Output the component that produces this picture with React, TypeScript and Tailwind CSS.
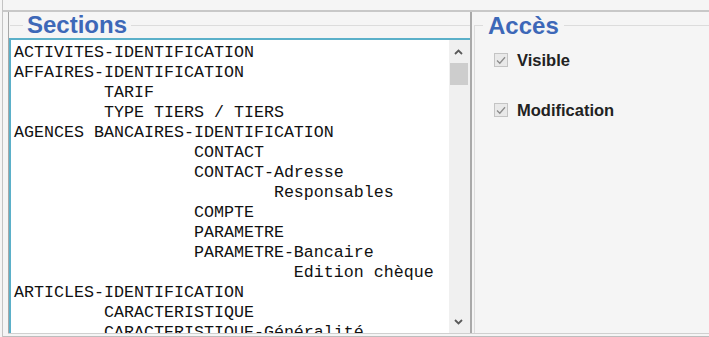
import React from "react";

const lines: [number, string][] = [
  [0, "ACTIVITES-IDENTIFICATION"],
  [0, "AFFAIRES-IDENTIFICATION"],
  [9, "TARIF"],
  [9, "TYPE TIERS / TIERS"],
  [0, "AGENCES BANCAIRES-IDENTIFICATION"],
  [18, "CONTACT"],
  [18, "CONTACT-Adresse"],
  [26, "Responsables"],
  [18, "COMPTE"],
  [18, "PARAMETRE"],
  [18, "PARAMETRE-Bancaire"],
  [28, "Edition chèque"],
  [0, "ARTICLES-IDENTIFICATION"],
  [9, "CARACTERISTIQUE"],
  [9, "CARACTERISTIQUE-Généralité"],
];

function Check({ label }: { label: string }) {
  return (
    <div className="flex items-center h-[20px]">
      <div className="w-[14px] h-[14px] border border-[#c4c4c4] bg-[#e9e9e9] flex items-center justify-center">
        <svg width="12" height="12" viewBox="0 0 12 12">
          <path d="M2 6.5 L4.8 9.2 L10 3.2" fill="none" stroke="#8c8c8c" strokeWidth="1.3" />
        </svg>
      </div>
      <span
        className="ml-[9px] text-[16.5px] font-bold text-[#222] leading-[20px]"
        style={{ fontFamily: '"Liberation Sans", Arial, sans-serif' }}
      >
        {label}
      </span>
    </div>
  );
}

export default function App() {
  return (
    <div
      className="w-[709px] h-[337px] bg-[#f5f5f5] overflow-hidden flex"
      style={{ fontFamily: '"Liberation Sans", Arial, sans-serif' }}
    >
      <div className="ml-[2px] border-l border-[#c4c4c4] flex-1 flex flex-col">
        <div className="h-[10px] shrink-0" />
        <div className="border-t-2 border-[#c8c8c8] flex-1 flex flex-col">
          <div className="flex h-[322px] shrink-0 border-b border-[#d0d0d0] ml-[5px]">
            {/* Left panel */}
            <div className="w-[464px] border-l border-[#a8a8a8] border-r-2 border-r-[#a9a9a9] flex flex-col">
              <div className="h-[26px] flex items-center shrink-0">
                <div className="ml-[1px] w-[13px] h-px bg-[#dcdcdc]" />
                <span className="px-[4px] text-[24px] leading-[24px] font-bold text-[#3d68b8]">Sections</span>
                <div className="flex-1 h-px bg-[#dcdcdc]" />
              </div>
              <div className="flex-1 flex border-t-2 border-l-2 border-[#5bb0c9] bg-white min-h-0 overflow-hidden">
                <div
                  className="flex-1 pl-[3px] pt-[3px] text-[16.67px] leading-[20px] text-[#111] whitespace-pre overflow-hidden"
                  style={{ fontFamily: '"Liberation Mono", "Courier New", monospace' }}
                >
                  {lines.map(([ind, t], i) => (
                    <div key={i} className="h-[20px]">
                      {" ".repeat(ind) + t}
                    </div>
                  ))}
                </div>
                <div className="w-[21px] bg-[#f0f0f0] flex flex-col items-center shrink-0">
                  <div className="h-[23px] w-full flex items-center justify-center pr-[2px]">
                    <svg width="9" height="6" viewBox="0 0 9 6">
                      <path d="M1 5 L4.5 1.5 L8 5" fill="none" stroke="#5a5a5a" strokeWidth="1.8" />
                    </svg>
                  </div>
                  <div className="w-[18px] h-[22px] bg-[#cdcdcd] mr-[2px]" />
                  <div className="flex-1" />
                  <div className="h-[22px] w-full flex items-center justify-center pr-[2px]">
                    <svg width="9" height="6" viewBox="0 0 9 6">
                      <path d="M1 1 L4.5 4.5 L8 1" fill="none" stroke="#5a5a5a" strokeWidth="1.8" />
                    </svg>
                  </div>
                </div>
              </div>
            </div>
            {/* Right panel */}
            <div className="flex-1 pl-[2px] flex flex-col">
              <div className="h-[26px] flex items-center shrink-0 pt-[1px]">
                <div className="w-[9px] h-px bg-[#dcdcdc]" />
                <span className="px-[5px] text-[24px] leading-[24px] font-bold text-[#3d68b8]">Accès</span>
                <div className="flex-1 h-px bg-[#dcdcdc]" />
              </div>
              <div className="flex-1 border-l border-[#dcdcdc] -mt-[13px] pt-[25px] pl-[19px] flex flex-col gap-[30px]">
                <Check label="Visible" />
                <Check label="Modification" />
              </div>
            </div>
          </div>
          <div className="h-[2px] shrink-0" />
          <div className="h-px bg-[#bdbdbd] shrink-0" />
        </div>
      </div>
    </div>
  );
}
